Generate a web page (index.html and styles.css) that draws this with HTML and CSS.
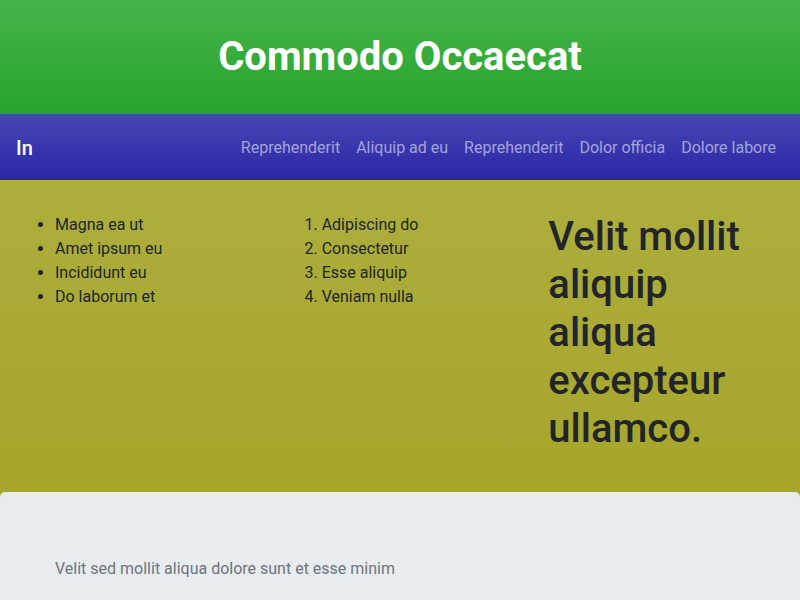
FILE: index.html
```html
<!DOCTYPE html>
<html lang="en">
<head>
<meta charset="utf-8">
<title>Commodo Occaecat</title>
<link rel="stylesheet" href="styles.css">
</head>
<body>
<header class="hero">
  <h1 class="hero-title">Commodo Occaecat</h1>
</header>
<nav class="navbar">
  <a class="brand" href="#">In</a>
  <ul class="nav-links">
    <li><a href="#">Reprehenderit</a></li>
    <li><a href="#">Aliquip ad eu</a></li>
    <li><a href="#">Reprehenderit</a></li>
    <li><a href="#">Dolor officia</a></li>
    <li><a href="#">Dolore labore</a></li>
  </ul>
</nav>
<section class="content">
  <div class="col">
    <ul class="list">
      <li>Magna ea ut</li>
      <li>Amet ipsum eu</li>
      <li>Incididunt eu</li>
      <li>Do laborum et</li>
    </ul>
  </div>
  <div class="col">
    <ol class="list">
      <li>Adipiscing do</li>
      <li>Consectetur</li>
      <li>Esse aliquip</li>
      <li>Veniam nulla</li>
    </ol>
  </div>
  <div class="col">
    <h1 class="big">Velit mollit aliquip aliqua excepteur ullamco.</h1>
  </div>
</section>
<div class="jumbo-wrap">
  <section class="jumbo">
    <p class="muted">Velit sed mollit aliqua dolore sunt et esse minim</p>
  </section>
</div>
</body>
</html>
```
FILE: styles.css
```css
* { box-sizing: border-box; }
html, body { margin: 0; padding: 0; }
body {
  font-family: Roboto, "Noto Sans", sans-serif;
  font-size: 16px;
  line-height: 1.5;
  color: #212529;
  background: #fff;
  overflow: hidden;
}
.hero {
  background: linear-gradient(to bottom, #46b44b, #27a42b);
  padding: 33px 0 33px;
  text-align: center;
}
.hero-title {
  margin: 0;
  font-size: 40px;
  line-height: 48px;
  font-weight: 700;
  color: #fff;
}
.navbar {
  display: flex;
  align-items: center;
  justify-content: space-between;
  background: linear-gradient(to bottom, #4646b6, #2a27a4);
  padding: 19px 16px 17px;
  height: 66px;
}
.brand {
  color: #fff;
  text-decoration: none;
  font-size: 20px;
  line-height: 30px;
  font-weight: 500;
}
.nav-links {
  display: flex;
  list-style: none;
  margin: 0;
  padding: 0;
}
.nav-links a {
  display: block;
  padding: 8px;
  color: rgba(255,255,255,0.55);
  text-decoration: none;
  line-height: 24px;
}
.content {
  display: grid;
  grid-template-columns: repeat(3, 1fr);
  background: linear-gradient(to bottom, #adae3d, #a6a52b);
  padding: 33px 0 31px;
}
.col { padding: 0 15px; }
.list {
  margin: 0 0 16px;
  padding-left: 40px;
}
.big {
  margin: 0 0 8px;
  font-size: 40px;
  line-height: 48px;
  font-weight: 500;
}
.jumbo-wrap {
  background: #a6a52b;
}
.jumbo {
  background: #e9ecef;
  border-radius: 5px;
  padding: 65px 55px 63px;
}
.muted {
  margin: 0;
  color: #6c757d;
}
```
